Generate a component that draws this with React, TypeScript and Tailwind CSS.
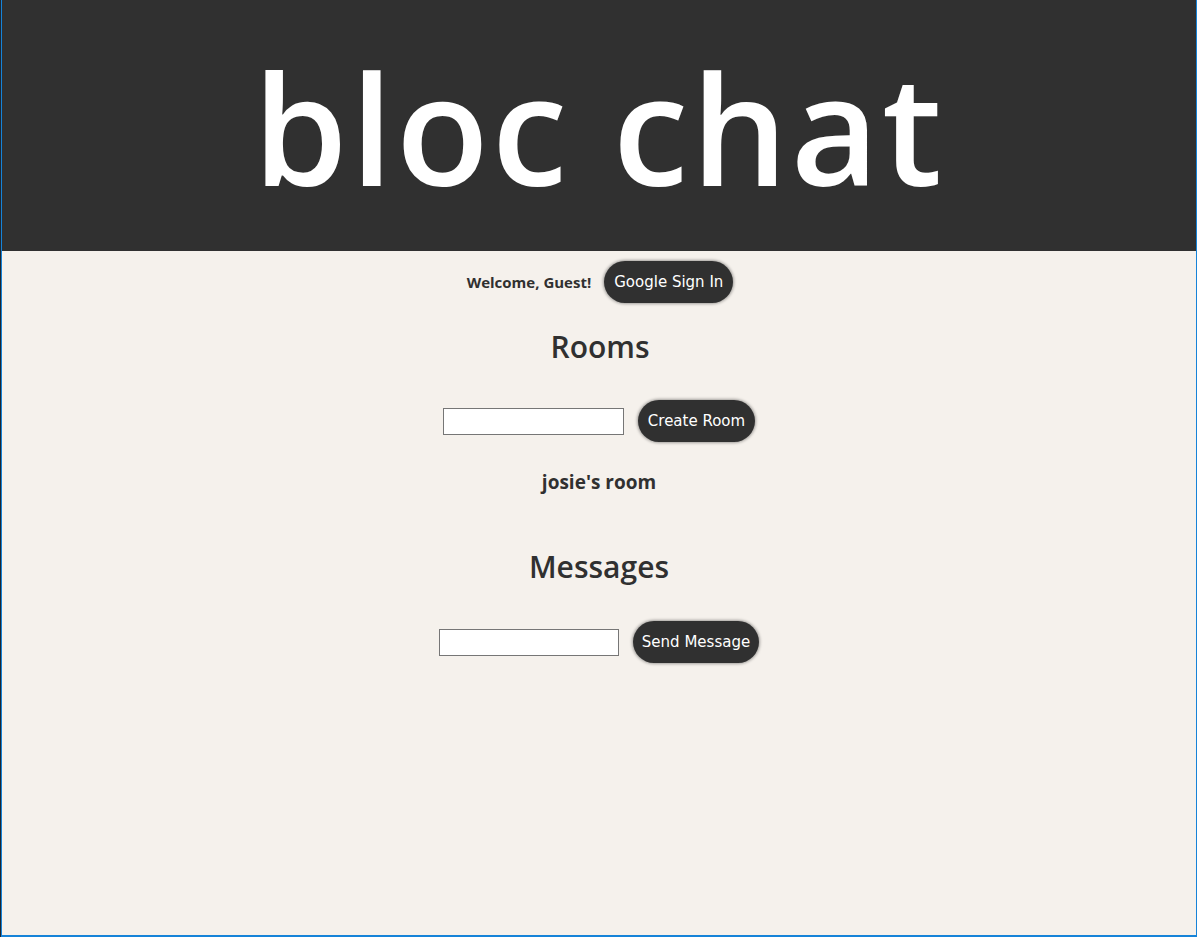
export default function App() {
  const font = { fontFamily: '"Open Sans", "Noto Sans", sans-serif' };
  const btnFont = { fontFamily: '"DejaVu Sans", sans-serif', fontSize: 15 };
  return (
    <div className="h-[937px] w-full bg-[#1e2630] pl-px" style={font}>
      <div className="h-full flex flex-col border-l border-r border-b-2 border-[#1683d8] bg-[#f5f1ec] text-[#303030] overflow-hidden">
        <header className="h-[251px] shrink-0 bg-[#303030] flex items-center justify-center">
          <h1 className="text-white text-[152px] font-semibold leading-none tracking-[3px] mt-[4px]">bloc chat</h1>
        </header>

        <div className="flex items-center justify-center gap-[13px] mt-[10px] ml-[2px]">
          <span className="text-[15px] font-bold">Welcome, Guest!</span>
          <button className="h-[42px] px-[10px] rounded-full bg-[#303030] text-white shadow-[0_0_3px_1px_rgba(0,0,0,0.35)]" style={btnFont}>
            Google Sign In
          </button>
        </div>

        <h2 className="text-center text-[30px] font-semibold mt-[29px] leading-none ml-[2px]">Rooms</h2>

        <div className="flex items-center justify-center gap-[14px] mt-[38px]">
          <input className="w-[181px] h-[27px] bg-white border border-[#767676]" />
          <button className="h-[42px] px-[10px] rounded-full bg-[#303030] text-white shadow-[0_0_3px_1px_rgba(0,0,0,0.35)]" style={btnFont}>
            Create Room
          </button>
        </div>

        <p className="text-center text-[19px] font-bold mt-[31px] leading-none">josie's room</p>

        <h2 className="text-center text-[30px] font-semibold mt-[60px] leading-none">Messages</h2>

        <div className="flex items-center justify-center gap-[14px] mt-[39px]">
          <input className="w-[180px] h-[27px] bg-white border border-[#767676]" />
          <button className="h-[42px] px-[9px] rounded-full bg-[#303030] text-white shadow-[0_0_3px_1px_rgba(0,0,0,0.35)]" style={btnFont}>
            Send Message
          </button>
        </div>
      </div>
    </div>
  );
}
